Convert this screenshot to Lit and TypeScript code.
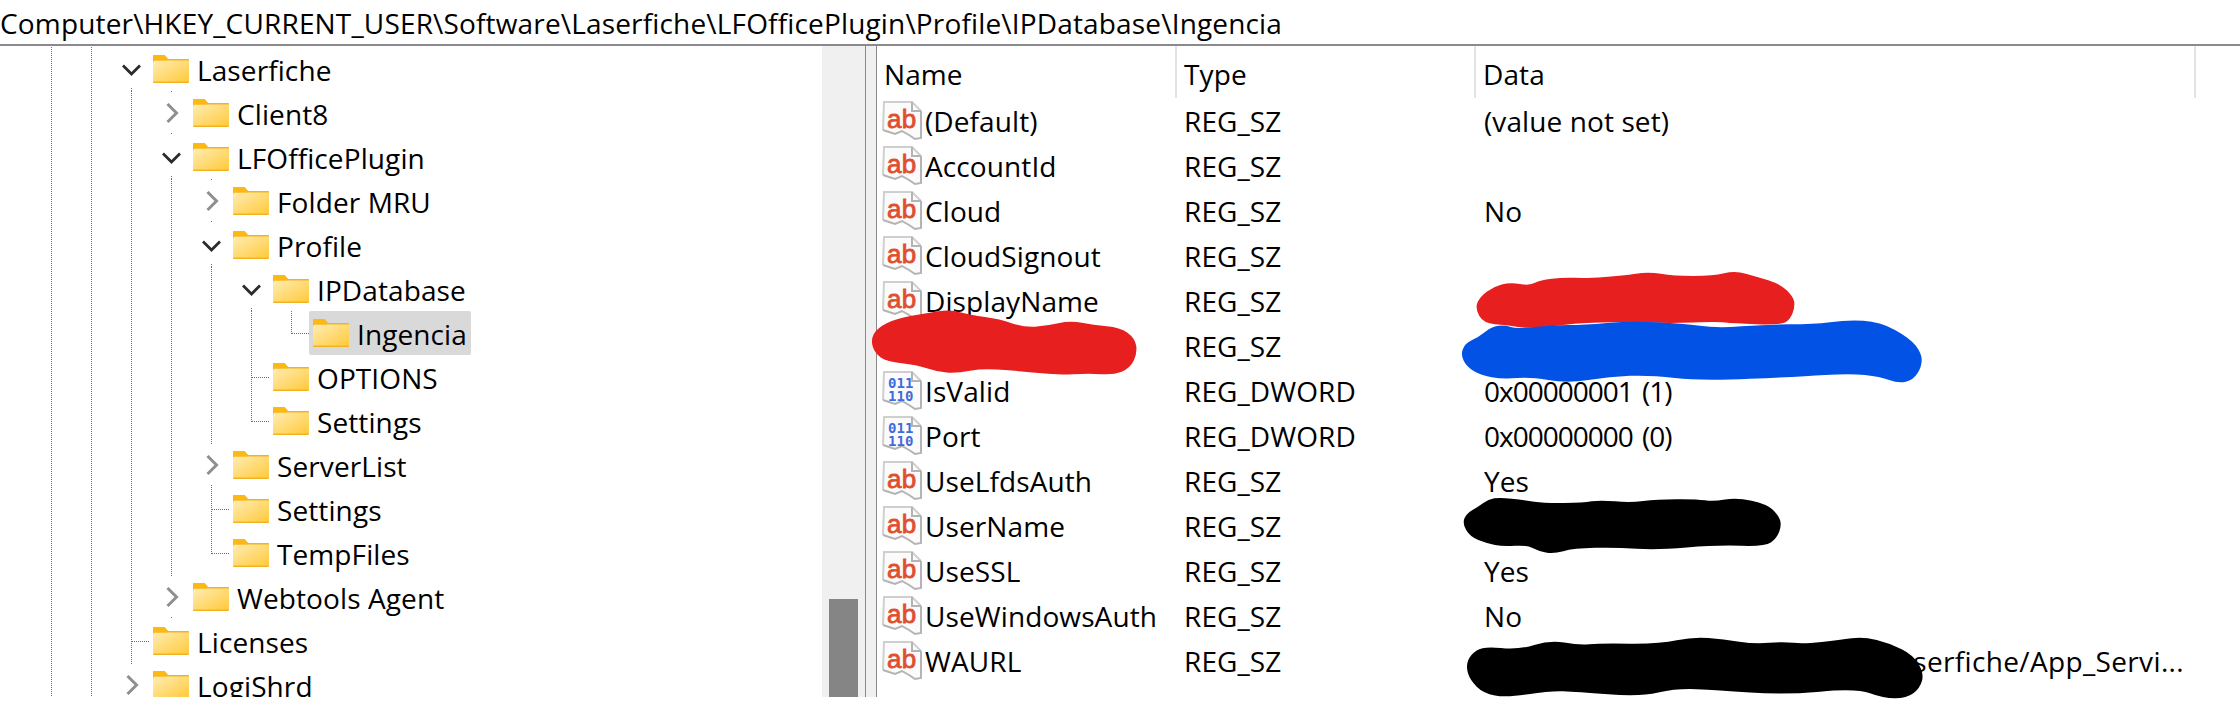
import { LitElement, html, css, svg } from "lit";
import { customElement } from "lit/decorators.js";

type Cell = "v" | "t" | "l" | "cd" | "cr";
interface TreeRow { cells: Cell[]; label: string; selected?: boolean }
interface ValueRow { kind: "ab" | "bin"; name: string; type: string; data: string; mode?: "end" | "hex" }

const TREE: TreeRow[] = [
  { cells: ["v", "v", "cd"], label: "Laserfiche" },
  { cells: ["v", "v", "v", "cr"], label: "Client8" },
  { cells: ["v", "v", "v", "cd"], label: "LFOfficePlugin" },
  { cells: ["v", "v", "v", "v", "cr"], label: "Folder MRU" },
  { cells: ["v", "v", "v", "v", "cd"], label: "Profile" },
  { cells: ["v", "v", "v", "v", "v", "cd"], label: "IPDatabase" },
  { cells: ["v", "v", "v", "v", "v", "v", "l"], label: "Ingencia", selected: true },
  { cells: ["v", "v", "v", "v", "v", "t"], label: "OPTIONS" },
  { cells: ["v", "v", "v", "v", "v", "l"], label: "Settings" },
  { cells: ["v", "v", "v", "v", "cr"], label: "ServerList" },
  { cells: ["v", "v", "v", "v", "t"], label: "Settings" },
  { cells: ["v", "v", "v", "v", "l"], label: "TempFiles" },
  { cells: ["v", "v", "v", "cr"], label: "Webtools Agent" },
  { cells: ["v", "v", "t"], label: "Licenses" },
  { cells: ["v", "v", "cr"], label: "LogiShrd" },
];

const VALUES: ValueRow[] = [
  { kind: "ab", name: "(Default)", type: "REG_SZ", data: "(value not set)" },
  { kind: "ab", name: "AccountId", type: "REG_SZ", data: "" },
  { kind: "ab", name: "Cloud", type: "REG_SZ", data: "No" },
  { kind: "ab", name: "CloudSignout", type: "REG_SZ", data: "" },
  { kind: "ab", name: "DisplayName", type: "REG_SZ", data: "" },
  { kind: "ab", name: "", type: "REG_SZ", data: "" },
  { kind: "bin", name: "IsValid", type: "REG_DWORD", data: "0x00000001 (1)", mode: "hex" },
  { kind: "bin", name: "Port", type: "REG_DWORD", data: "0x00000000 (0)", mode: "hex" },
  { kind: "ab", name: "UseLfdsAuth", type: "REG_SZ", data: "Yes" },
  { kind: "ab", name: "UserName", type: "REG_SZ", data: "" },
  { kind: "ab", name: "UseSSL", type: "REG_SZ", data: "Yes" },
  { kind: "ab", name: "UseWindowsAuth", type: "REG_SZ", data: "No" },
  { kind: "ab", name: "WAURL", type: "REG_SZ", data: "Laserfiche/App_Servi...", mode: "end" },
];

type Blob = { ox: number; oy: number; color: string; pts: number[][] };
const BLOBS: Blob[] = [
  { ox: 860, oy: 290, color: "#e71f1f", pts: [[32,150],[50,115],[110,85],[200,70],[270,58],[330,75],[420,87],[490,112],[560,108],[630,92],[700,105],[780,112],[825,145],[832,190],[810,235],[760,255],[690,250],[590,255],[500,245],[370,235],[290,250],[230,245],[170,225],[80,215],[45,190]] },
  { ox: 1450, oy: 260, color: "#e71f1f", pts: [[75,145],[90,110],[130,80],[180,67],[240,77],[270,60],[340,52],[410,55],[520,47],[595,35],[670,48],[790,48],[855,32],[920,50],[990,72],[1030,110],[1035,140],[1020,180],[990,195],[850,190],[800,185],[660,190],[530,185],[370,190],[240,207],[170,195],[100,190]] },
  { ox: 1450, oy: 260, color: "#0352e6", pts: [[32,285],[45,250],[85,232],[125,200],[165,195],[200,207],[310,195],[400,195],[540,183],[700,190],[800,205],[950,193],[1090,193],[1190,180],[1290,185],[1380,235],[1415,280],[1415,320],[1390,360],[1345,370],[1290,350],[1200,340],[1050,350],[750,363],[600,345],[480,350],[350,370],[240,350],[160,358],[90,345],[50,320]] },
  { ox: 1450, oy: 490, color: "#000", pts: [[37,100],[50,70],[85,50],[115,28],[150,22],[220,30],[285,40],[400,38],[450,30],[540,38],[620,28],[740,27],[790,35],[860,22],[950,42],[985,75],[995,105],[980,145],[945,170],[800,165],[620,180],[500,172],[370,175],[310,192],[265,183],[230,165],[160,170],[110,160],[60,140]] },
  { ox: 1450, oy: 630, color: "#000", pts: [[48,110],[60,75],[100,48],[205,60],[300,30],[385,45],[450,40],[630,42],[730,20],[820,28],[915,42],[1000,35],[1060,42],[1170,30],[1240,20],[1320,40],[1390,75],[1422,130],[1410,175],[1370,205],[1300,205],[1220,175],[1000,195],[800,180],[680,175],[570,200],[380,185],[300,182],[170,203],[100,190],[60,150]] },
];

function blobPath(b: Blob): string {
  const p = b.pts.map(([x, y]) => [b.ox + x / 3, b.oy + y / 3]);
  const mid = (a: number[], c: number[]) => [(a[0] + c[0]) / 2, (a[1] + c[1]) / 2];
  const start = mid(p[p.length - 1], p[0]);
  let d = `M${start[0].toFixed(1)} ${start[1].toFixed(1)}`;
  p.forEach((pt, i) => {
    const m = mid(pt, p[(i + 1) % p.length]);
    d += `Q${pt[0].toFixed(1)} ${pt[1].toFixed(1)} ${m[0].toFixed(1)} ${m[1].toFixed(1)}`;
  });
  return d + "Z";
}

const dots = (d: string) => svg`<path d=${d} fill="none" stroke="#6e6e6e" stroke-width="1" stroke-dasharray="1 1"/>`;

function cellArt(c: Cell) {
  switch (c) {
    case "v": return dots("M20.5 0V44");
    case "t": return dots("M20.5 0V44M21 22.5H39");
    case "l": return dots("M20.5 0V23M21 22.5H39");
    case "cd": return svg`${dots("M20.5 41V44")}<path d="M12 18.5 20.5 27 29 18.5" fill="none" stroke="#2b2b2b" stroke-width="2.8"/>`;
    case "cr": return svg`${dots("M20.5 0V2M20.5 42V44")}<path d="M16.5 13 25.5 22 16.5 31" fill="none" stroke="#8f8f8f" stroke-width="3"/>`;
  }
}

@customElement("app-root")
export class AppRoot extends LitElement {
  static styles = css`
    :host {
      display: block;
      position: relative;
      width: 2240px;
      height: 702px;
      background: #fff;
      overflow: hidden;
      font-family: "Open Sans", "Noto Sans", sans-serif;
      font-size: 28px;
      letter-spacing: 0.1px;
      color: #000;
    }
    .address {
      height: 44px;
      line-height: 47px;
      letter-spacing: 0.16px;
      white-space: nowrap;
      border-bottom: 2px solid #8a8a8e;
    }
    .main { display: flex; height: 651px; }
    .tree {
      width: 791px;
      padding: 1px 0 0 31px;
      overflow: hidden;
    }
    .tree-row { display: flex; height: 44px; }
    .cell { display: block; width: 40px; height: 44px; flex: none; }
    .item {
      display: flex;
      align-items: center;
      gap: 8px;
      margin-left: -2px;
      padding: 0 4px 0 4px;
      border-radius: 2px;
      white-space: nowrap;
    }
    .item span { padding-top: 1px; }
    .item.selected { background: #d9d9d9; }
    .folder { display: block; width: 36px; height: 28px; flex: none; }
    .scroll {
      width: 29px;
      padding: 0 7px;
      display: flex;
      flex-direction: column;
      justify-content: flex-end;
      background: #f0f0f0;
      border-right: 1px solid #8a8a8e;
    }
    .thumb { height: 98px; background: #858585; }
    .split { width: 10px; background: #f0f0f0; border-right: 1px solid #8a8a8e; }
    .pane { flex: 1; min-width: 0; }
    .head, .row { display: grid; grid-template-columns: 300px 299px 720px; }
    .head { height: 52px; }
    .hcell {
      display: flex;
      align-items: center;
      border-right: 2px solid #e3e3e3;
      padding: 4px 0 0 7px;
      box-sizing: border-box;
      height: 52px;
    }
    .hcell.first { padding-left: 7px; }
    .row { height: 45px; }
    .name { display: flex; align-items: center; gap: 3px; padding-left: 5px; white-space: nowrap; }
    .name span { padding-top: 1px; }
    .vicon { display: block; width: 40px; height: 40px; flex: none; }
    .type, .data { display: flex; align-items: center; padding: 1px 0 0 8px; white-space: nowrap; }
    .type { padding-left: 7px; }
    .data.end { justify-content: flex-end; padding-right: 12px; letter-spacing: 0.35px; }
    .data.hex { letter-spacing: -1px; word-spacing: 3px; }
    .ink { position: absolute; left: 0; top: 0; display: block; pointer-events: none; }
    .ab { font: 400 26px "Liberation Sans", sans-serif; fill: #e04e2f; stroke: #e04e2f; stroke-width: 0.8px; letter-spacing: 0.4px; }
    .bin { font: 700 14px "DejaVu Sans Mono", monospace; fill: #3f6be0; }
  `;

  private folder() {
    return html`<svg class="folder" viewBox="0 0 36 28">
      <defs>
        <linearGradient id="fg" x1="0" y1="0" x2="1" y2="1">
          <stop offset="0" stop-color="#ffecb4" />
          <stop offset="1" stop-color="#ffca3c" />
        </linearGradient>
      </defs>
      <path d="M1 0H11.5L15 4H35.5Q36 4 36 5V27Q36 28 35 28H1Q0 28 0 27V1Q0 0 1 0Z" fill="#f3b31f" />
      <path d="M0 7.5 1 5.5H36V26.5H0Z" fill="url(#fg)" />
      <path d="M0 1Q0 0 1 0H11.5L15 4 14 5.5H0Z" fill="#fdb913" />
    </svg>`;
  }

  private valueIcon(kind: "ab" | "bin") {
    return html`<svg class="vicon" viewBox="0 0 40 40">
      <path d="M2 1H30L39 10V38L33 39 27 35 20 32 13 33 7 31 1 29Z" fill="#fbfbfb" />
      <path d="M1 29 2 1H30L39 10" fill="none" stroke="#cfcfcf" stroke-width="2" />
      <path d="M1 29 7 31 13 33 20 30 27 34 33 38 39 37V10M30 1V10H39" fill="none" stroke="#b4b4b4" stroke-width="2" />
      ${kind === "ab"
        ? svg`<text class="ab" x="5" y="27">ab</text>`
        : svg`<text class="bin" x="6" y="17">011</text><text class="bin" x="6" y="30">110</text>`}
    </svg>`;
  }

  render() {
    return html`
      <div class="address">Computer\\HKEY_CURRENT_USER\\Software\\Laserfiche\\LFOfficePlugin\\Profile\\IPDatabase\\Ingencia</div>
      <div class="main">
        <div class="tree">
          ${TREE.map(
            (r) => html`<div class="tree-row">
              ${r.cells.map((c) => html`<svg class="cell" viewBox="0 0 40 44">${cellArt(c)}</svg>`)}
              <div class="item ${r.selected ? "selected" : ""}">${this.folder()}<span>${r.label}</span></div>
            </div>`
          )}
        </div>
        <div class="scroll"><div class="thumb"></div></div>
        <div class="split"></div>
        <div class="pane">
          <div class="head">
            <div class="hcell first">Name</div>
            <div class="hcell">Type</div>
            <div class="hcell">Data</div>
          </div>
          ${VALUES.map(
            (v) => html`<div class="row">
              <div class="name">${this.valueIcon(v.kind)}<span>${v.name}</span></div>
              <div class="type">${v.type}</div>
              <div class="data ${v.mode ?? ""}">${v.data}</div>
            </div>`
          )}
        </div>
      </div>
      <svg class="ink" width="2240" height="702" viewBox="0 0 2240 702">
        ${BLOBS.map((b) => svg`<path d=${blobPath(b)} fill=${b.color} />`)}
      </svg>
    `;
  }
}
